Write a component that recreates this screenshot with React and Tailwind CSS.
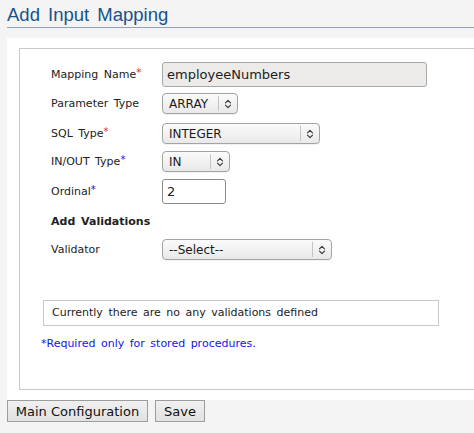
import React from "react";

const font = { fontFamily: '"DejaVu Sans", Verdana, sans-serif' };

function Chevrons() {
  return (
    <svg width="8" height="12" viewBox="0 0 8 12" fill="none">
      <path d="M1.5 4.8 L4 2.3 L6.5 4.8" stroke="#3a3a3a" strokeWidth="1.2" strokeLinecap="round" strokeLinejoin="round" />
      <path d="M1.5 7.2 L4 9.7 L6.5 7.2" stroke="#3a3a3a" strokeWidth="1.2" strokeLinecap="round" strokeLinejoin="round" />
    </svg>
  );
}

function Select({ value, width }) {
  return (
    <div
      className="flex h-[21px] items-center rounded-[4px] border border-[#a3a3a3] bg-gradient-to-b from-[#fbfbfb] to-[#e9e9e9] shadow-[0_1px_0_rgba(0,0,0,0.05)]"
      style={{ width }}
    >
      <span className="flex-1 pl-[6px] text-[12px] leading-none text-[#1a1a1a]">{value}</span>
      <span className="h-[15px] w-px bg-[#c4c4c4]" />
      <span className="flex w-[18px] items-center justify-center">
        <Chevrons />
      </span>
    </div>
  );
}

function RedStar() {
  return <span className="relative -top-[2px] text-[10px] text-[#e0262a]">*</span>;
}

function BlueStar() {
  return <span className="relative -top-[2px] text-[10px] text-[#1414e6]">*</span>;
}

function Label({ children }) {
  return (
    <div className="w-[111px] shrink-0 text-[11px] leading-none text-[#222] [word-spacing:2px]">
      {children}
    </div>
  );
}

export default function App() {
  return (
    <div className="h-[433px] w-[474px] overflow-hidden bg-[#f4f4f4]" style={font}>
      <div className="pl-[7px]">
        <h1
          className="h-[28px] border-b border-[#8fa2c2] pt-[5px] text-[18.5px] leading-[20px] font-normal text-[#18528d] [word-spacing:3px]"
          style={{ fontFamily: '"Liberation Sans", Arial, sans-serif' }}
        >
          Add Input Mapping
        </h1>
        <div className="mt-[10px] w-[520px] bg-white px-[12px] pt-[10px] pb-[10px]">
          <div className="flex h-[342px] flex-col border border-[#c9c9c9] pt-[13px]">
            <div className="flex h-[25px] items-center pl-[31px]">
              <Label>
                Mapping Name<RedStar />
              </Label>
              <div className="flex h-[25px] w-[265px] items-center rounded-[3px] border border-[#a7a7a7] bg-[#ecebe9] pl-[4px] text-[13px] text-[#222]">
                employeeNumbers
              </div>
            </div>
            <div className="mt-[6px] flex h-[21px] items-center pl-[31px]">
              <Label>Parameter Type</Label>
              <Select value="ARRAY" width={76} />
            </div>
            <div className="mt-[9px] flex h-[21px] items-center pl-[31px]">
              <Label>
                SQL Type<RedStar />
              </Label>
              <Select value="INTEGER" width={158} />
            </div>
            <div className="mt-[7px] flex h-[21px] items-center pl-[31px]">
              <Label>
                IN/OUT Type<BlueStar />
              </Label>
              <Select value="IN" width={68} />
            </div>
            <div className="mt-[7px] flex h-[25px] items-center pl-[31px]">
              <Label>
                Ordinal<BlueStar />
              </Label>
              <div className="flex h-[25px] w-[64px] items-center rounded-[3px] border border-[#8a8a8a] bg-white pl-[4px] text-[13px] text-[#222]">
                2
              </div>
            </div>
            <div className="mt-[7px] flex h-[20px] items-center pl-[31px]">
              <div className="text-[11px] leading-none font-bold text-[#222] [word-spacing:2px]">Add Validations</div>
            </div>
            <div className="mt-[8px] flex h-[21px] items-center pl-[31px]">
              <Label>Validator</Label>
              <Select value="--Select--" width={170} />
            </div>
            <div className="mt-[40px] ml-[23px] flex h-[26px] w-[396px] items-center border border-[#c9c9c9] pl-[8px] text-[11px] text-[#222] [word-spacing:2px]">
              Currently there are no any validations defined
            </div>
            <div className="mt-[10px] ml-[21px] text-[11px] leading-[16px] text-[#1414e6] [word-spacing:2px]">
              *Required only for stored procedures.
            </div>
          </div>
        </div>
        <div className="flex gap-[7px]">
          <button className="h-[22px] w-[141px] border border-[#9c9c9c] bg-gradient-to-b from-[#f0f0f0] to-[#e2e2e2] text-[13px] leading-none text-[#111]">
            Main Configuration
          </button>
          <button className="h-[22px] w-[50px] border border-[#9c9c9c] bg-gradient-to-b from-[#f0f0f0] to-[#e2e2e2] text-[13px] leading-none text-[#111]">
            Save
          </button>
        </div>
      </div>
    </div>
  );
}
